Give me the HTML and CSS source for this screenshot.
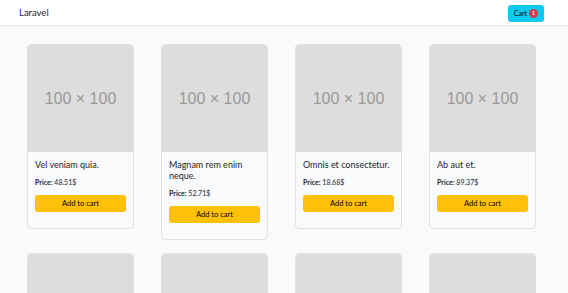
FILE: index.html
```html
<!DOCTYPE html>
<html lang="en">
<head>
  <meta charset="UTF-8" />
  <meta name="viewport" content="width=device-width, initial-scale=1.0" />
  <title>Laravel</title>
  <link rel="stylesheet" href="styles.css">
</head>
<body>
  <nav class="navbar">
    <a class="brand" href="#">Laravel</a>
    <button class="cart-btn">Cart <span class="badge">1</span></button>
  </nav>

  <main class="products">
    <div class="card">
      <div class="thumb">100 × 100</div>
      <div class="card-body">
        <p class="title">Vel veniam quia.</p>
        <p class="price"><strong>Price:</strong> 48.51$</p>
        <button class="add-btn">Add to cart</button>
      </div>
    </div>
    <div class="card">
      <div class="thumb">100 × 100</div>
      <div class="card-body">
        <p class="title">Magnam rem enim neque.</p>
        <p class="price"><strong>Price:</strong> 52.71$</p>
        <button class="add-btn">Add to cart</button>
      </div>
    </div>
    <div class="card">
      <div class="thumb">100 × 100</div>
      <div class="card-body">
        <p class="title">Omnis et consectetur.</p>
        <p class="price"><strong>Price:</strong> 18.68$</p>
        <button class="add-btn">Add to cart</button>
      </div>
    </div>
    <div class="card">
      <div class="thumb">100 × 100</div>
      <div class="card-body">
        <p class="title">Ab aut et.</p>
        <p class="price"><strong>Price:</strong> 89.37$</p>
        <button class="add-btn">Add to cart</button>
      </div>
    </div>

    <div class="card">
      <div class="thumb">100 × 100</div>
    </div>
    <div class="card">
      <div class="thumb">100 × 100</div>
    </div>
    <div class="card">
      <div class="thumb">100 × 100</div>
    </div>
    <div class="card">
      <div class="thumb">100 × 100</div>
    </div>
  </main>
</body>
</html>
```

FILE: styles.css
```css
body {
  margin: 0;
  font-family: Lato, "Noto Sans", sans-serif;
  background-color: #f8fafc;
  color: #212529;
}
.navbar {
  height: 25px;
  background: #fff;
  border-bottom: 1px solid #ececec;
  display: flex;
  align-items: center;
  justify-content: space-between;
  padding: 0 24px 0 19px;
}
.brand {
  color: #212529;
  text-decoration: none;
  font-size: 9.5px;
}
.cart-btn {
  background: #0dcaf0;
  border: none;
  border-radius: 3px;
  height: 17px;
  padding: 0 6px;
  font-family: inherit;
  font-size: 7px;
  color: #000;
  display: flex;
  align-items: center;
  gap: 2px;
  margin-top: 1px;
}
.badge {
  background: #dc3545;
  color: #fff;
  font-weight: bold;
  font-size: 5px;
  border-radius: 50%;
  width: 9px;
  height: 9px;
  display: inline-flex;
  align-items: center;
  justify-content: center;
}
.products {
  display: grid;
  grid-template-columns: repeat(4, 107px);
  column-gap: 27px;
  row-gap: 13px;
  align-items: start;
  padding: 18px 0 0 27px;
}
.card {
  border: 1px solid #dfe1e4;
  border-radius: 4px;
  overflow: hidden;
  background-color: #f8fafc;
}
.thumb {
  height: 107px;
  background: #dddddd;
  color: #999;
  font-family: "Liberation Sans", Arial, sans-serif;
  font-size: 16px;
  display: flex;
  align-items: center;
  justify-content: center;
}
.card-body {
  padding: 7px 7px 16px;
}
.title {
  margin: 0 0 7px;
  font-size: 9px;
  line-height: 11px;
  color: #212529;
}
.price {
  margin: 0 0 3px;
  font-size: 7px;
  line-height: 10px;
}
.add-btn {
  width: 100%;
  height: 17px;
  background: #ffc107;
  border: none;
  border-radius: 3px;
  font-family: inherit;
  font-size: 7.5px;
  color: #000;
}
```
